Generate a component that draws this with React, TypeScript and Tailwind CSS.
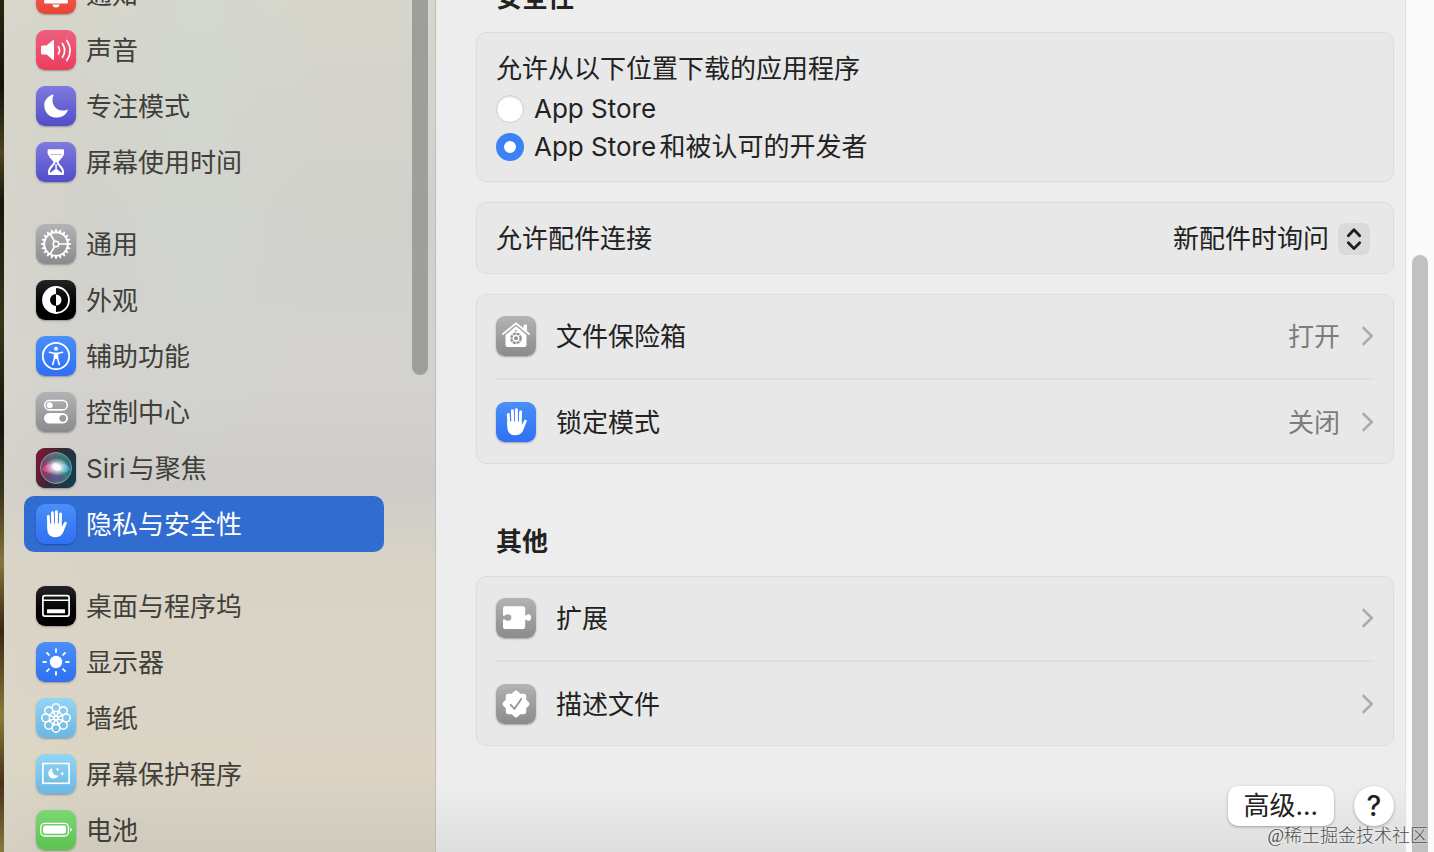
import React from "react";

type Glyph = () => React.ReactElement;

interface Item {
  label: string;
  tile: string;
  glyph: Glyph;
  active?: boolean;
}

const grayTile = "bg-linear-to-b from-[#b3b3b5] to-[#8b8b8e]";
const blueTile = "bg-linear-to-b from-[#4a8ff9] to-[#2f6ff3]";
const indigoTile = "bg-linear-to-b from-[#7f7ade] to-[#524cc9]";
const blackTile = "bg-linear-to-b from-[#242426] to-[#000000]";
const skyTile = "bg-linear-to-b from-[#93d5f4] to-[#6bb6e3]";

function Canvas({ children }: { children: React.ReactNode }) {
  return (
    <svg viewBox="0 0 40 40" className="size-10" fill="none" stroke="none" strokeLinecap="round" strokeLinejoin="round" aria-hidden="true">
      {children}
    </svg>
  );
}

function Bell() {
  return (
    <Canvas>
      <path d="M20 6c-5 0-8 4-8 9 0 6-1 8-4 12h24c-3-4-4-6-4-12 0-5-3-9-8-9Z" fill="#fff" />
      <rect x="8" y="26" width="24" height="3.4" rx="1.5" fill="#fff" />
      <path d="M16.3 30.5h7.4c-.4 1.900-1.900 3-3.700 3s-3.300-1.100-3.700-3Z" fill="#fff" />
    </Canvas>
  );
}

function Speaker() {
  return (
    <Canvas>
      <path d="M6.500 15.500H10.500L16.500 10.400Q18 9.400 18 11V29Q18 30.600 16.500 29.600L10.500 24.500H6.500Q5 24.500 5 23V17Q5 15.500 6.500 15.500Z" fill="#fff" />
      <g stroke="#fff" strokeWidth="1.700">
        <path d="M22.400 16.600Q24.700 20.200 22.400 24" />
        <path d="M26.400 13.500Q31 20.200 26.400 27.200" />
        <path d="M30.800 10.400Q37.600 20.200 30.800 30.500" />
      </g>
    </Canvas>
  );
}

function Moon() {
  return (
    <Canvas>
      <path d="M16.800 8.500C17.500 8.200 17.800 8.600 17.500 9.300C13.500 18.500 21.500 27.500 31 23.700C31.700 23.400 32 23.800 31.700 24.500C30 29 25.700 31.600 20.700 31.600C13.600 31.600 8.300 26.400 8.300 19.400C8.300 14.500 11.500 10.200 16.800 8.500Z" fill="#fff" />
    </Canvas>
  );
}

function Hourglass() {
  return (
    <Canvas>
      <path d="M13 8.400H27V11C27 15.500 21.500 17.600 21.500 20.300S27 25 27 29.500V32H13V29.500C13 25 18.500 23 18.500 20.300S13 15.500 13 11Z" stroke="#fff" strokeWidth="2" />
      <path d="M12.500 8h15v4h-15ZM14.500 13.500h11L20 20ZM20 22.500V27L26 31.500H14L20 27Z" fill="#fff" stroke="#fff" strokeWidth="1" />
    </Canvas>
  );
}

function Gear() {
  return (
    <Canvas>
      <g stroke="#fff">
        <circle cx="20" cy="20" r="11.800" strokeWidth="2" />
        {Array.from({ length: 20 }, (_, i) => (
          <path key={i} d="M20 7.400V6" strokeWidth="2" transform={`rotate(${i * 18} 20 20)`} />
        ))}
        <circle cx="20" cy="20" r="2.800" strokeWidth="1.500" />
        {[0, 120, 240].map((a) => (
          <path key={a} d="M23 20H31.500" strokeWidth="1.700" transform={`rotate(${a} 20 20)`} />
        ))}
      </g>
    </Canvas>
  );
}

function Contrast() {
  return (
    <Canvas>
      <circle cx="20" cy="20" r="13" stroke="#fff" strokeWidth="1.800" />
      <path d="M20 7A13 13 0 0 0 20 33V26A6 6 0 0 1 20 14Z" fill="#fff" />
      <path d="M20 14.500A5.500 5.500 0 0 1 20 25.500Z" fill="#fff" />
    </Canvas>
  );
}

function Person() {
  return (
    <Canvas>
      <circle cx="20" cy="20" r="13.200" stroke="#fff" strokeWidth="1.800" />
      <circle cx="20" cy="12.700" r="2" fill="#fff" />
      <path d="M13.500 16.300L18 17.200H22L26.500 16.300M18.500 17.500V22L16.700 28.500M21.500 17.500V22L23.300 28.500" stroke="#fff" strokeWidth="1.600" />
      <path d="M18 17H22V23H18Z" fill="#fff" />
    </Canvas>
  );
}

function Toggles() {
  return (
    <Canvas>
      <rect x="8.800" y="8.500" width="22.500" height="9.400" rx="4.700" stroke="#fff" strokeWidth="1.600" />
      <circle cx="13.700" cy="13.200" r="3" fill="#fff" />
      <rect x="8" y="21" width="24" height="10.600" rx="5.300" fill="#fff" />
      <circle cx="26.800" cy="26.300" r="3.400" fill="#9b9b9d" />
    </Canvas>
  );
}

function Siri() {
  return (
    <svg viewBox="0 0 40 40" className="size-10" aria-hidden="true">
      <defs>
        <linearGradient id="siriBack" x1="0" y1="0.300" x2="1" y2="0.700">
          <stop offset="0" stopColor="#7d1632" />
          <stop offset="0.500" stopColor="#302a3a" />
          <stop offset="1" stopColor="#123d50" />
        </linearGradient>
        <linearGradient id="siriOrb" x1="0" y1="0.600" x2="1" y2="0.400">
          <stop offset="0" stopColor="#b82c68" />
          <stop offset="0.450" stopColor="#8a7ea4" />
          <stop offset="0.750" stopColor="#3f9f92" />
          <stop offset="1" stopColor="#2a7f9a" />
        </linearGradient>
        <radialGradient id="siriGlow">
          <stop offset="0" stopColor="#fff" />
          <stop offset="0.300" stopColor="#fff" stopOpacity="0.800" />
          <stop offset="1" stopColor="#fff" stopOpacity="0" />
        </radialGradient>
      </defs>
      <rect width="40" height="40" rx="9" fill="url(#siriBack)" />
      <circle cx="20" cy="20" r="15.500" fill="url(#siriOrb)" fillOpacity="0.700" stroke="#6fb3a0" strokeOpacity="0.900" />
      <path d="M6 15C12 5 27 5 34 17C27 12 17 13 6 15Z" fill="#2c6f66" fillOpacity="0.450" />
      <path d="M8 28C16 25 20 24 30 30C22 37 11 34 8 28Z" fill="#4e4a8c" fillOpacity="0.500" />
      <path d="M20 20C25 14 32 16 34 21C31 26 26 26 20 20Z" fill="#4db4e6" fillOpacity="0.600" />
      <path d="M6 21C10 15 15 15 20 20C16 26 10 26 6 21Z" fill="#f0609a" fillOpacity="0.600" />
      <ellipse cx="21" cy="19" rx="12" ry="9" fill="url(#siriGlow)" />
      <ellipse cx="20.500" cy="19" rx="5" ry="3.500" fill="#fff" fillOpacity="0.700" transform="rotate(35 20.500 19)" />
    </svg>
  );
}

function Hand() {
  return (
    <Canvas>
      <g stroke="#fff" strokeWidth="2.900">
        <path d="M12.300 12.500L12.900 24M16.400 8.600L16.700 21M20.400 7.600V21M24.600 10L24.200 22" />
      </g>
      <path d="M11.300 19.500H25.600V23.300L28.200 18.400C29 17 31.200 17.600 30.700 19.400L27.500 27.500C26 31.500 23.500 33.200 19.300 33.200C14 33.200 11.300 30 11.300 25Z" fill="#fff" />
    </Canvas>
  );
}

function DockWindow() {
  return (
    <Canvas>
      <rect x="6.900" y="9.700" width="26.200" height="20.400" rx="2" stroke="#fff" strokeWidth="1.700" />
      <path d="M7 14.300H33" stroke="#fff" strokeWidth="1.500" />
      <rect x="11" y="23.200" width="18" height="4" rx="0.500" fill="#fff" />
    </Canvas>
  );
}

function Sun() {
  return (
    <Canvas>
      <circle cx="20" cy="20" r="6.200" fill="#fff" />
      {Array.from({ length: 8 }, (_, i) => (
        <path key={i} d="M20 10V7.200" stroke="#fff" strokeWidth="1.800" transform={`rotate(${i * 45} 20 20)`} />
      ))}
    </Canvas>
  );
}

function Flower() {
  return (
    <Canvas>
      {Array.from({ length: 8 }, (_, i) => (
        <g key={i} stroke="#fff" strokeWidth="1.500" transform={`rotate(${i * 45} 20 20)`}>
          <circle cx="20" cy="9.700" r="3.900" />
          <path d="M17.200 12.500L19.300 18M22.800 12.500L20.700 18" strokeWidth="1.200" />
        </g>
      ))}
      <circle cx="20" cy="20" r="2" stroke="#fff" strokeWidth="1.300" />
    </Canvas>
  );
}

function NightFrame() {
  return (
    <Canvas>
      <rect x="6.900" y="9.500" width="26.200" height="19.800" stroke="#fff" strokeWidth="1.600" strokeLinejoin="miter" />
      <path d="M16.300 14.200C13.700 15 12.300 17 12.300 19.300C12.300 22.400 14.500 24.600 17.600 24.600C20 24.600 22 23.200 22.600 21.300C18.500 22.400 15.500 18.500 16.300 14.200Z" fill="#fff" />
      <path d="M21.500 13.600L22.100 14.800L23.300 15.400L22.100 16L21.500 17.200L20.900 16L19.700 15.400L20.900 14.800ZM26.200 17.600L26.900 19L28.300 19.700L26.900 20.400L26.200 21.800L25.500 20.400L24.100 19.700L25.500 19Z" fill="#fff" />
    </Canvas>
  );
}

function Battery() {
  return (
    <Canvas>
      <rect x="4.800" y="13.400" width="27.600" height="12.600" rx="3.800" stroke="#fff" strokeWidth="1.300" />
      <rect x="7.200" y="15.600" width="22.800" height="8.200" rx="1.800" fill="#fff" />
      <path d="M34.200 17.600C36.400 18.400 36.400 21 34.200 21.800Z" fill="#fff" />
    </Canvas>
  );
}

function Vault() {
  return (
    <Canvas>
      <path d="M7 18L20 7.200L33 18" stroke="#fff" strokeWidth="1.800" />
      <path d="M27.500 8.800H31V15.500L27.500 12.500Z" fill="#fff" />
      <path d="M20 10.300L30.500 19V29Q30.500 31 28.500 31H11.500Q9.500 31 9.500 29V19Z" fill="#fff" />
      <circle cx="20" cy="22.300" r="4.700" stroke="#929294" strokeWidth="2.300" strokeDasharray="2.900 0.800" strokeLinecap="butt" />
      <circle cx="20" cy="22.300" r="2" fill="#929294" />
      <circle cx="20" cy="14.800" r="0.900" fill="#929294" />
    </Canvas>
  );
}

function Puzzle() {
  return (
    <Canvas>
      <path d="M9 8.300H27Q29.200 8.300 29.200 10.500V17.300Q29.800 18 30.700 17Q32 15.600 33.800 16.600Q35.200 17.600 35.200 19.500T33.800 22.500Q32 23.400 30.700 22Q29.800 21.100 29.200 21.800V28.800Q29.200 31 27 31H9Q7 31 7 28.800V21.700Q7.700 20.800 8.900 21.500C10.500 23 13 23.200 14.500 21.800Q16.300 19.500 14.500 17.200C13 15.800 10.500 16 8.900 17.500Q7.700 18.200 7 17.300V10.500Q7 8.300 9 8.300Z" fill="#fff" />
    </Canvas>
  );
}

function Seal() {
  return (
    <Canvas>
      {[0, 45].map((a) => (
        <rect key={a} x="11.500" y="11.500" width="17" height="17" rx="1" fill="#fff" stroke="#fff" strokeWidth="3.400" transform={`rotate(${a} 20 20)`} />
      ))}
      <path d="M14.800 20.800L18.400 25L25.200 15" stroke="#98989a" strokeWidth="1.900" />
    </Canvas>
  );
}

const groups: Item[][] = [
  [
    { label: "通知", tile: "bg-linear-to-b from-[#f26a5e] to-[#ea4535]", glyph: Bell },
    { label: "声音", tile: "bg-linear-to-b from-[#ee5f80] to-[#ec3c5c]", glyph: Speaker },
    { label: "专注模式", tile: indigoTile, glyph: Moon },
    { label: "屏幕使用时间", tile: indigoTile, glyph: Hourglass },
  ],
  [
    { label: "通用", tile: grayTile, glyph: Gear },
    { label: "外观", tile: blackTile, glyph: Contrast },
    { label: "辅助功能", tile: blueTile, glyph: Person },
    { label: "控制中心", tile: grayTile, glyph: Toggles },
    { label: "Siri与聚焦", tile: "bg-[#302a3a]", glyph: Siri },
    { label: "隐私与安全性", tile: blueTile, glyph: Hand, active: true },
  ],
  [
    { label: "桌面与程序坞", tile: blackTile, glyph: DockWindow },
    { label: "显示器", tile: blueTile, glyph: Sun },
    { label: "墙纸", tile: skyTile, glyph: Flower },
    { label: "屏幕保护程序", tile: skyTile, glyph: NightFrame },
    { label: "电池", tile: "bg-linear-to-b from-[#7cd673] to-[#5cc350]", glyph: Battery },
  ],
];

function Tile({ tile, glyph: G }: { tile: string; glyph: Glyph }) {
  return (
    <span className={`block size-10 shrink-0 overflow-hidden rounded-[9px] shadow-[0_1px_2px_rgba(0,0,0,0.3)] ${tile}`}>
      <G />
    </span>
  );
}

function Card({ className = "", children }: { className?: string; children: React.ReactNode }) {
  return <div className={`rounded-[10px] border border-[#dcdcdc] bg-[#e8e8e8] px-[19px] ${className}`}>{children}</div>;
}

function LinkRow({ label, value, tile, glyph }: { label: string; value?: string; tile: string; glyph: Glyph }) {
  return (
    <button type="button" className="flex h-[82px] w-full items-center gap-5 text-left">
      <Tile tile={tile} glyph={glyph} />
      <span className="flex-1 pt-0.5">{label}</span>
      {value && <span className="pt-0.5 text-[#7c7c7c]">{value}</span>}
      <svg viewBox="0 0 14 20" className="h-5 w-3.5 shrink-0" fill="none" stroke="#acacac" strokeWidth="2.600" strokeLinecap="round" strokeLinejoin="round" aria-hidden="true">
        <path d="M3.500 2L11.800 10L3.500 18" />
      </svg>
    </button>
  );
}

function RadioRow({ label, checked }: { label: string; checked?: boolean }) {
  return (
    <label className="flex h-[38px] items-center gap-2.5">
      <input
        type="radio"
        name="source"
        defaultChecked={checked}
        className="size-7 appearance-none rounded-full border border-[#cfcfcf] bg-white shadow-[inset_0_1px_2px_rgba(0,0,0,0.12)] checked:border-8 checked:border-[#3b82f7] checked:shadow-none"
      />
      {label}
    </label>
  );
}

function Sidebar() {
  return (
    <aside className="flex w-[432px] shrink-0 border-r border-[#bdbcb8] bg-[radial-gradient(ellipse_at_45%_10%,rgba(208,218,208,0.5),transparent_35%),linear-gradient(to_right,rgba(220,216,200,0.4),transparent_20%),linear-gradient(to_bottom,#d7d6cc_0%,#d1d1cc_25%,#d3d2cf_45%,#cdccc9_57%,#d8d3c6_66%,#dcd5c6_90%,#d0cabc_100%)]">
      <nav aria-label="设置" className="-mt-[34px] flex flex-1 flex-col gap-[26px] pl-5">
        {groups.map((group, i) => (
          <ul key={i}>
            {group.map((item) => (
              <li key={item.label}>
                <a
                  href="#"
                  aria-current={item.active ? "page" : undefined}
                  className={`flex h-14 items-center gap-2.5 rounded-[10px] px-3 ${item.active ? "bg-[#316cd0] text-white" : "text-[#403f3a]"}`}
                >
                  <Tile tile={item.tile} glyph={item.glyph} />
                  <span className="pt-0.5">{item.label}</span>
                </a>
              </li>
            ))}
          </ul>
        ))}
      </nav>
      <div className="ml-7 mr-[7px] h-[375px] w-4 rounded-b-full bg-[#9e9e9b]" />
    </aside>
  );
}

export default function App() {
  return (
    <div className="flex h-screen overflow-hidden bg-[#ededed] font-[Inter,'Noto_Sans_CJK_SC',sans-serif] text-[26px] leading-9 text-[#222222] [text-autospace:normal]">
      <div className="w-1 shrink-0 bg-[linear-gradient(to_bottom,#2b2510_0%,#14110a_10%,#4d4420_18%,#17140c_24%,#3a3418_38%,#15130b_50%,#3c351c_58%,#86753a_66%,#3a2613_74%,#857c36_84%,#4a2f1b_92%,#847a3c_100%)]" />
      <Sidebar />
      <main className="min-w-0 flex-1 bg-linear-to-b from-[#ededed] from-92% to-[#dedede] pl-10 pr-[11px]">
        <section className="-mt-5">
          <h2 className="mb-4 ml-5 font-bold">安全性</h2>
          <div className="flex flex-col gap-5">
            <Card className="pt-[17px] pb-[15px]">
              <fieldset>
                <legend className="mb-0.5 h-[38px] leading-[38px]">允许从以下位置下载的应用程序</legend>
                <RadioRow label="App Store" />
                <RadioRow label="App Store和被认可的开发者" checked />
              </fieldset>
            </Card>
            <Card className="flex h-[72px] items-center justify-between pt-0.5">
              <label htmlFor="accessories">允许配件连接</label>
              <div className="relative mr-1">
                <select id="accessories" className="block h-9 appearance-none bg-transparent pr-10">
                  <option>新配件时询问</option>
                </select>
                <span className="pointer-events-none absolute top-0.5 right-0 flex size-8 items-center justify-center rounded-[7px] bg-[#dadada]">
                  <svg viewBox="0 0 32 32" className="size-8" fill="none" stroke="#1f1f1f" strokeWidth="2.800" strokeLinecap="round" strokeLinejoin="round" aria-hidden="true">
                    <path d="M10.300 12.700L16 6.800L21.700 12.700M10.300 19.700L16 25.600L21.700 19.700" />
                  </svg>
                </span>
              </div>
            </Card>
            <Card>
              <LinkRow label="文件保险箱" value="打开" tile={grayTile} glyph={Vault} />
              <hr className="my-px border-t-2 border-[#dfdfdf]" />
              <LinkRow label="锁定模式" value="关闭" tile={blueTile} glyph={Hand} />
            </Card>
          </div>
        </section>
        <section className="mt-15">
          <h2 className="mb-4 ml-5 font-bold">其他</h2>
          <Card>
            <LinkRow label="扩展" tile={grayTile} glyph={Puzzle} />
            <hr className="my-px border-t-2 border-[#dfdfdf]" />
            <LinkRow label="描述文件" tile={grayTile} glyph={Seal} />
          </Card>
        </section>
        <div className="mt-10 flex justify-end gap-5">
          <button type="button" className="h-10 rounded-[10px] bg-white px-4 shadow-[0_1px_3px_rgba(0,0,0,0.3)]">高级...</button>
          <button type="button" aria-label="帮助" className="size-10 rounded-full bg-white text-[28px] font-medium shadow-[0_1px_3px_rgba(0,0,0,0.3)]">?</button>
        </div>
      </main>
      <div className="flex w-[29px] shrink-0 flex-col border-l border-[#e2e2e2] bg-[#fafafa] pt-[255px] pl-1.5">
        <div className="w-4 flex-1 rounded-t-full bg-[#c1c1c1]" />
      </div>
      <p className="absolute right-1.5 bottom-1 font-['Liberation_Serif','Noto_Sans_CJK_SC',serif] text-lg leading-6 font-light text-[#4c4c4c] [text-autospace:no-autospace] [text-shadow:0_0_2px_#fff]">@稀土掘金技术社区</p>
    </div>
  );
}
